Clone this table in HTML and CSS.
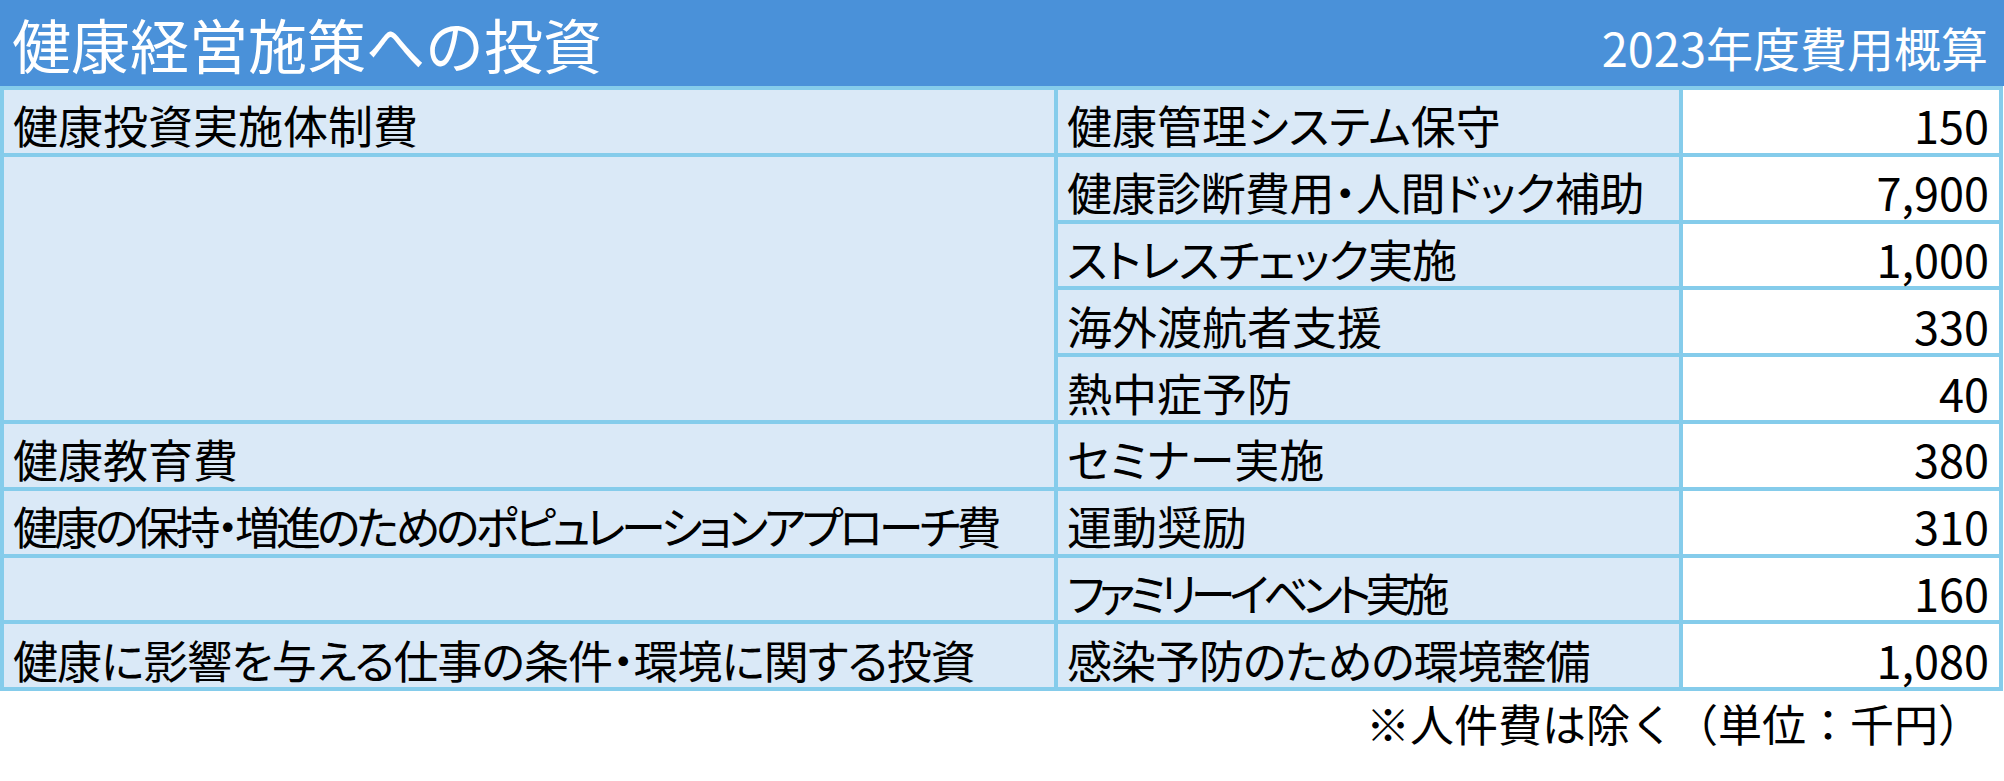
FILE: index.html
```html
<!DOCTYPE html>
<html lang="ja">
<head>
<meta charset="utf-8">
<title>健康経営施策への投資</title>
<link rel="stylesheet" href="styles.css">
</head>
<body>
<div class="page">
  <header class="banner">
    <h1 class="banner-title">健康経営施策への投資</h1>
    <div class="banner-sub">2023年度費用概算</div>
  </header>
  <div class="cost-table">
    <div class="cell cat r1">健康投資実施体制費</div>
    <div class="cell cat r2-5"></div>
    <div class="cell cat r6">健康教育費</div>
    <div class="cell cat r7 tight-4">健康の保持・増進のためのポピュレーションアプローチ費</div>
    <div class="cell cat r8"></div>
    <div class="cell cat r9 tight-1">健康に影響を与える仕事の条件・環境に関する投資</div>

    <div class="cell item">健康管理システム保守</div>
    <div class="cell amount">150</div>
    <div class="cell item tight-05">健康診断費用・人間ドック補助</div>
    <div class="cell amount">7,900</div>
    <div class="cell item tight-1">ストレスチェック実施</div>
    <div class="cell amount">1,000</div>
    <div class="cell item">海外渡航者支援</div>
    <div class="cell amount">330</div>
    <div class="cell item">熱中症予防</div>
    <div class="cell amount">40</div>
    <div class="cell item">セミナー実施</div>
    <div class="cell amount">380</div>
    <div class="cell item">運動奨励</div>
    <div class="cell amount">310</div>
    <div class="cell item tight-6">ファミリーイベント実施</div>
    <div class="cell amount">160</div>
    <div class="cell item tight-1">感染予防のための環境整備</div>
    <div class="cell amount">1,080</div>
  </div>
  <p class="note">※人件費は除く（単位：千円）</p>
</div>
</body>
</html>
```
FILE: styles.css
```css
html, body {
  margin: 0;
  padding: 0;
  background: #ffffff;
}

body {
  font-family: "Noto Sans CJK JP", "Noto Sans", sans-serif;
  color: #000000;
}

.page {
  width: 2004px;
}

.banner {
  height: 86px;
  background: #4a91d9;
  color: #ffffff;
  display: flex;
  justify-content: space-between;
  align-items: center;
  padding: 0 16px 0 12px;
  box-sizing: border-box;
}

.banner-title {
  margin: 0;
  font-size: 59px;
  font-weight: 400;
  line-height: 1;
}

.banner-sub {
  font-size: 47px;
  line-height: 1;
  padding-top: 6px;
}

.cost-table {
  width: 2003px;
  box-sizing: border-box;
  display: grid;
  grid-template-columns: 1050px 621px 316px;
  grid-template-rows: repeat(9, 62.8px);
  gap: 4px;
  padding: 4px;
  background: #85cceb;
}

.cell {
  font-size: 45px;
  line-height: 54px;
  font-feature-settings: "palt";
  display: flex;
  align-items: center;
  padding: 8px 10px 0 9px;
  white-space: nowrap;
  box-sizing: border-box;
}

.tight-05 { letter-spacing: -0.5px; }
.tight-1 { letter-spacing: -1px; }
.tight-4 { letter-spacing: -4px; }
.tight-6 { letter-spacing: -6px; }

.cat {
  grid-column: 1;
  background: #dae9f7;
}

.r1 { grid-row: 1; }
.r2-5 { grid-row: 2 / 6; }
.r6 { grid-row: 6; }
.r7 { grid-row: 7; }
.r8 { grid-row: 8; }
.r9 { grid-row: 9; }

.item {
  grid-column: 2;
  background: #dae9f7;
}

.amount {
  grid-column: 3;
  background: #ffffff;
  justify-content: flex-end;
}

.note {
  margin: 6px 0 0;
  padding-right: 22px;
  text-align: right;
  font-size: 44px;
  line-height: 52px;
}
```
